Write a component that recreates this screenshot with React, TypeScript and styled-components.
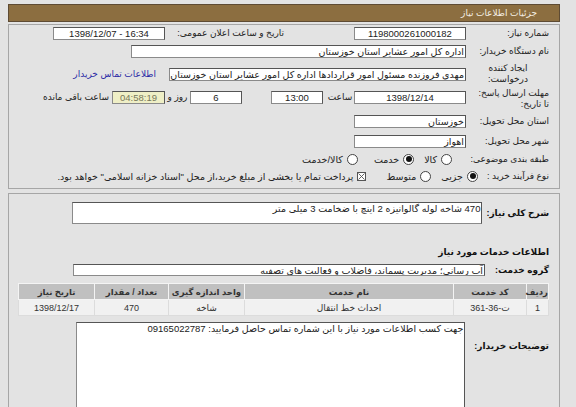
import React from "react";
import styled, { createGlobalStyle } from "styled-components";

const GlobalStyle = createGlobalStyle`
  html, body {
    margin: 0;
    padding: 0;
    background: #e3e3e3;
    overflow: hidden;
    font-family: "Liberation Sans", "DejaVu Sans", sans-serif;
  }
`;

const Page = styled.div`
  direction: rtl;
  padding: 4px 16px 0 8px;
  display: flex;
  flex-direction: column;
  font-size: 9.5px;
  color: #222;
`;

const Header = styled.div`
  height: 16px;
  background: #8c6e40;
  border: 1px solid #5e4b33;
  display: flex;
  align-items: center;
  padding-right: 22px;
  color: #f4eee4;
  font-size: 9px;
`;

const Panel = styled.div<{ $mt: number; $pt: number; $pb: number }>`
  margin-top: ${(p) => p.$mt}px;
  border: 1px solid #a6a6a6;
  padding: ${(p) => p.$pt}px 10px ${(p) => p.$pb}px 12px;
  display: flex;
  flex-direction: column;
`;

const Row = styled.div<{ $h: number; $mt?: number; $align?: string }>`
  display: flex;
  align-items: ${(p) => p.$align || "center"};
  height: ${(p) => p.$h}px;
  margin-top: ${(p) => p.$mt || 0}px;
`;

const Label = styled.div<{ $w?: number; $bold?: boolean; $mt?: number }>`
  ${(p) => (p.$w ? `width: ${p.$w}px;` : "")}
  flex-shrink: 0;
  text-align: right;
  white-space: nowrap;
  line-height: 11px;
  font-weight: ${(p) => (p.$bold ? "bold" : "normal")};
  font-size: 9px;
  color: ${(p) => (p.$bold ? "#111" : "#222")};
  margin-top: ${(p) => p.$mt || 0}px;
`;

const TwoLine = styled.span`
  display: block;
  text-align: center;
`;

const Field = styled.div<{
  $w: number;
  $h?: number;
  $mr?: number;
  $center?: boolean;
  $ltr?: boolean;
  $yellow?: boolean;
  $top?: boolean;
  $raise?: boolean;
}>`
  width: ${(p) => p.$w}px;
  height: ${(p) => p.$h || 13}px;
  margin-right: ${(p) => p.$mr || 0}px;
  margin-bottom: ${(p) => (p.$raise ? 4 : 0)}px;
  box-sizing: border-box;
  flex-shrink: 0;
  background: ${(p) => (p.$yellow ? "#efefc6" : "#fff")};
  border: 1px solid #8a8a8a;
  border-top-color: #555;
  border-right-color: #555;
  color: ${(p) => (p.$yellow ? "#77775a" : "#222")};
  direction: ${(p) => (p.$ltr ? "ltr" : "rtl")};
  line-height: 11px;
  padding: 0 1px;
  white-space: nowrap;
  overflow: hidden;
  display: flex;
  align-items: ${(p) => (p.$top ? "flex-start" : "center")};
  justify-content: ${(p) => (p.$center ? "center" : "flex-start")};
`;

const Inline = styled.div<{ $w?: number; $mr?: number; $center?: boolean; $raise?: boolean }>`
  ${(p) => (p.$w ? `width: ${p.$w}px;` : "")}
  margin-right: ${(p) => p.$mr || 0}px;
  margin-bottom: ${(p) => (p.$raise ? 4 : 0)}px;
  flex-shrink: 0;
  text-align: ${(p) => (p.$center ? "center" : "right")};
  white-space: nowrap;
  line-height: 11px;
  font-size: 9px;
`;

const Link = styled.a`
  margin-right: 13px;
  color: #2b2ba6;
  text-decoration: none;
  white-space: nowrap;
  font-size: 9px;
`;

const Option = styled.div<{ $mr: number }>`
  display: flex;
  align-items: center;
  margin-right: ${(p) => p.$mr}px;
  white-space: nowrap;
  gap: 4px;
`;

const RadioCircle = styled.span<{ $on?: boolean }>`
  width: 11px;
  height: 11px;
  box-sizing: border-box;
  border-radius: 50%;
  border: 1px solid #444;
  background: #fff;
  display: flex;
  align-items: center;
  justify-content: center;
  &::after {
    content: "";
    display: ${(p) => (p.$on ? "block" : "none")};
    width: 6px;
    height: 6px;
    border-radius: 50%;
    background: #111;
  }
`;

const CheckBox = styled.span`
  width: 9px;
  height: 9px;
  display: flex;
`;

const SectionTitle = styled.div`
  margin-top: 21px;
  height: 14px;
  line-height: 14px;
  font-weight: bold;
  font-size: 9px;
  color: #111;
`;

const Table = styled.table`
  margin-top: 6px;
  width: 524px;
  border-collapse: collapse;
  table-layout: fixed;
  direction: rtl;
`;

const Th = styled.th<{ $w: number }>`
  width: ${(p) => p.$w}px;
  height: 15px;
  padding: 0;
  background: #c0c0c0;
  border: 1px solid #f4f4f4;
  font-weight: bold;
  font-size: 8.5px;
  color: #333;
  text-align: center;
`;

const Td = styled.td`
  height: 15px;
  padding: 0;
  background: #f1f1f1;
  border: 1px solid #dcdcdc;
  font-size: 9px;
  color: #333;
  text-align: center;
`;

const Radio = ({ on, label, mr }: { on?: boolean; label: string; mr: number }) => (
  <Option $mr={mr}>
    <RadioCircle $on={on} />
    <span>{label}</span>
  </Option>
);

const cols = [
  { t: "ردیف", w: 21 },
  { t: "کد خدمت", w: 72 },
  { t: "نام خدمت", w: 208 },
  { t: "واحد اندازه گیری", w: 75 },
  { t: "تعداد / مقدار", w: 73 },
  { t: "تاریخ نیاز", w: 75 },
];

const row = ["1", "ت-36-361", "احداث خط انتقال", "شاخه", "470", "1398/12/17"];

export default function App() {
  return (
    <>
      <GlobalStyle />
      <Page>
        <Header>جزئیات اطلاعات نیاز</Header>

        <Panel $mt={2} $pt={0} $pb={3}>
          <Row $h={16}>
            <Label $w={82}>شماره نیاز:</Label>
            <Field $w={112} $mr={1} $center>1198000261000182</Field>
            <Inline $w={115} $mr={70}>تاریخ و ساعت اعلان عمومی:</Inline>
            <Field $w={112} $mr={4} $center $ltr>1398/12/07 - 16:34</Field>
          </Row>
          <Row $h={20}>
            <Label $w={82}>نام دستگاه خریدار:</Label>
            <Field $w={335} $mr={1}>اداره کل امور عشایر استان خوزستان</Field>
          </Row>
          <Row $h={26}>
            <Label $w={82}>
              <TwoLine>ایجاد کننده</TwoLine>
              <TwoLine>درخواست:</TwoLine>
            </Label>
            <Field $w={297} $mr={1}>
              مهدی فروزنده مسئول امور قراردادها اداره کل امور عشایر استان خوزستان
            </Field>
            <Link href="#">اطلاعات تماس خریدار</Link>
          </Row>
          <Row $h={24}>
            <Label $w={82}>
              مهلت ارسال پاسخ:
              <br />
              تا تاریخ:
            </Label>
            <Field $w={112} $mr={1} $center $ltr $raise>1398/12/14</Field>
            <Inline $w={28} $center $raise>ساعت</Inline>
            <Field $w={52} $mr={3} $center $ltr $raise>13:00</Field>
            <Field $w={52} $mr={29} $center $raise>6</Field>
            <Inline $w={25} $center $raise>روز و</Inline>
            <Field $w={53} $center $ltr $yellow $raise>04:58:19</Field>
            <Inline $mr={3} $raise>ساعت باقی مانده</Inline>
          </Row>
          <Row $h={20}>
            <Label $w={82}>استان محل تحویل:</Label>
            <Field $w={112} $mr={1}>خوزستان</Field>
          </Row>
          <Row $h={20}>
            <Label $w={82}>شهر محل تحویل:</Label>
            <Field $w={112} $mr={1}>اهواز</Field>
          </Row>
          <Row $h={16}>
            <Label $w={73}>طبقه بندی موضوعی:</Label>
            <Radio label="کالا" mr={24} />
            <Radio on label="خدمت" mr={10} />
            <Radio label="کالا/خدمت" mr={16} />
          </Row>
          <Row $h={18}>
            <Label $w={71}>نوع فرآیند خرید :</Label>
            <Radio on label="جزیی" mr={0} />
            <Radio label="متوسط" mr={10} />
            <Option $mr={20}>
              <CheckBox>
                <svg width="9" height="9" viewBox="0 0 9 9">
                  <rect x="0.5" y="0.5" width="8" height="8" fill="#fff" stroke="#555" />
                  <path d="M1.5 1.5 L7.5 7.5 M7.5 1.5 L1.5 7.5" stroke="#555" strokeWidth="0.9" />
                </svg>
              </CheckBox>
              <span>پرداخت تمام یا بخشی از مبلغ خرید،از محل "اسناد خزانه اسلامی" خواهد بود.</span>
            </Option>
          </Row>
        </Panel>

        <Panel $mt={4} $pt={8} $pb={0}>
          <Row $h={22}>
            <Label $bold>شرح کلی نیاز:</Label>
            <Field $w={410} $h={22} $mr={4} $top>
              470 شاخه لوله گالوانیزه 2 اینچ با ضخامت 3 میلی متر
            </Field>
          </Row>
          <SectionTitle>اطلاعات خدمات مورد نیاز</SectionTitle>
          <Row $h={14} $mt={4}>
            <Label $bold>گروه خدمت:</Label>
            <Field $w={412} $h={12} $mr={10}>آب رسانی؛ مدیریت پسماند، فاضلاب و فعالیت های تصفیه</Field>
          </Row>
          <Table>
            <thead>
              <tr>
                {cols.map((c) => (
                  <Th key={c.t} $w={c.w}>
                    {c.t}
                  </Th>
                ))}
              </tr>
            </thead>
            <tbody>
              <tr>
                {row.map((v, i) => (
                  <Td key={i}>{v}</Td>
                ))}
              </tr>
            </tbody>
          </Table>
          <Row $h={100} $mt={6} $align="flex-start">
            <Label $bold $mt={19}>توضیحات خریدار:</Label>
            <Field $w={389} $h={100} $mr={9} $top>
              جهت کسب اطلاعات مورد نیاز با این شماره تماس حاصل فرمایید: 09165022787
            </Field>
          </Row>
        </Panel>
      </Page>
    </>
  );
}
